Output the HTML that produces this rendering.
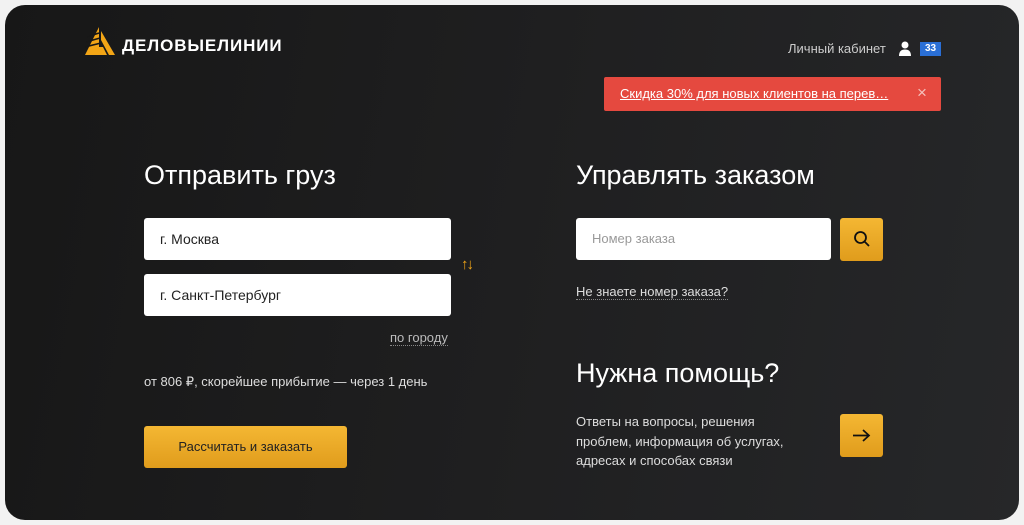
<!DOCTYPE html>
<html><head><meta charset="utf-8"><style>
*{box-sizing:border-box;margin:0;padding:0}
body{width:1024px;height:525px;background:#f2f2f2;font-family:"Liberation Sans",Arial,sans-serif;position:relative;overflow:hidden}
.card{position:absolute;left:5px;top:5px;width:1014px;height:515px;border-radius:20px;background:linear-gradient(100deg,#171717 0%,#1f1f20 50%,#262729 100%);}
.abs{position:absolute}
.h{color:#fff;font-size:27px;font-weight:normal}
.inp{background:#fff;border-radius:3px;height:42px;font-size:14px;color:#222;padding-left:16px;line-height:42px}
.btn{background:linear-gradient(#f4b733,#e09c1c);border-radius:3px}
.t{color:#ddd;font-size:13px}
</style></head><body>
<div class="card">
 <svg class="abs" style="left:80px;top:22px" width="32" height="30" viewBox="0 0 32 30">
  <path d="M14 0 L0 28 L22 28 L18 20 L14 20 Z" fill="#f2a516"/>
  <path d="M16 4 L30 28 L24 28 L16 13 Z" fill="#f2a516"/>
  <g stroke="#171717" stroke-width="1.6"><line x1="2" y1="10" x2="14" y2="6"/><line x1="1" y1="15" x2="15" y2="11"/><line x1="0" y1="20" x2="16" y2="16"/></g>
 </svg>
 <div class="abs" style="left:117px;top:31px;color:#fff;font-size:17px;font-weight:bold;letter-spacing:0.9px;font-weight:600">ДЕЛОВЫЕЛИНИИ</div>
 <div class="abs" style="left:783px;top:36px;color:#ccc;font-size:13px">Личный кабинет</div>
 <svg class="abs" style="left:893px;top:36px" width="14" height="15" viewBox="0 0 14 15"><circle cx="7" cy="4" r="3.5" fill="#fff"/><path d="M1 15 Q1 8.5 7 8.5 Q13 8.5 13 15Z" fill="#fff"/></svg>
 <div class="abs" style="left:915px;top:37px;width:21px;height:14px;background:#2a6fd6;color:#fff;font-size:10px;font-weight:bold;text-align:center;line-height:14px">33</div>
 <div class="abs" style="left:599px;top:72px;width:337px;height:34px;background:#e5493f;border-radius:2px">
  <span class="abs" style="left:16px;top:9px;color:#fff;font-size:13px;text-decoration:underline;white-space:nowrap">Скидка 30% для новых клиентов на перев…</span>
  <span class="abs" style="left:313px;top:6px;color:#f5c0bb;font-size:17px">×</span>
 </div>
 <div class="abs h" style="left:139px;top:155px">Отправить груз</div>
 <div class="abs inp" style="left:139px;top:213px;width:307px">г. Москва</div>
 <div class="abs inp" style="left:139px;top:269px;width:307px">г. Санкт-Петербург</div>
 <div class="abs" style="left:456px;top:251px;color:#f2a516;font-size:15px;font-weight:bold;letter-spacing:-2px">↑↓</div>
 <div class="abs t" style="left:385px;top:325px;color:#bbb;border-bottom:1px dotted #888">по городу</div>
 <div class="abs t" style="left:139px;top:369px">от 806 ₽, скорейшее прибытие — через 1 день</div>
 <div class="abs btn" style="left:139px;top:421px;width:203px;height:42px;color:#222;font-size:13px;text-align:center;line-height:42px">Рассчитать и заказать</div>
 <div class="abs h" style="left:571px;top:155px">Управлять заказом</div>
 <div class="abs inp" style="left:571px;top:213px;width:255px;color:#999;font-size:13px">Номер заказа</div>
 <div class="abs btn" style="left:835px;top:213px;width:43px;height:43px">
  <svg class="abs" style="left:13px;top:12px" width="18" height="18" viewBox="0 0 18 18"><circle cx="7.5" cy="7.5" r="5.5" fill="none" stroke="#111" stroke-width="1.8"/><line x1="11.5" y1="11.5" x2="16" y2="16" stroke="#111" stroke-width="1.8"/></svg>
 </div>
 <div class="abs t" style="left:571px;top:279px;border-bottom:1px dotted #888">Не знаете номер заказа?</div>
 <div class="abs h" style="left:571px;top:353px">Нужна помощь?</div>
 <div class="abs t" style="left:571px;top:407px;line-height:19.5px">Ответы на вопросы, решения<br>проблем, информация об услугах,<br>адресах и способах связи</div>
 <div class="abs btn" style="left:835px;top:409px;width:43px;height:43px">
  <svg class="abs" style="left:12px;top:14px" width="19" height="15" viewBox="0 0 19 15"><path d="M1 7.5H17M11 2L17 7.5L11 13" fill="none" stroke="#111" stroke-width="1.7"/></svg>
 </div>
</div>
</body></html>
